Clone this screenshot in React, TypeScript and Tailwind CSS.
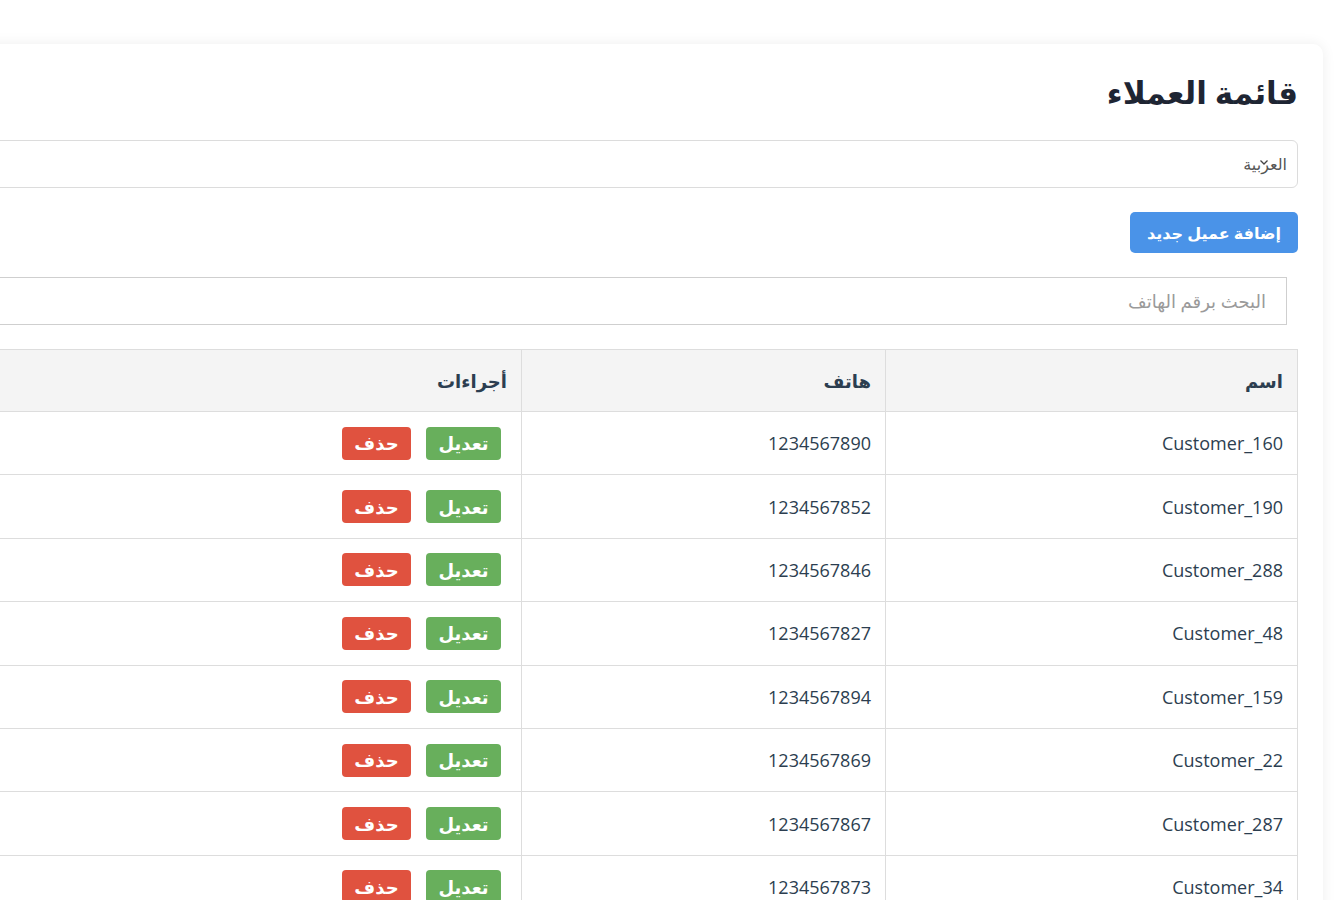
import React from "react";

type Customer = { name: string; phone: string };

const customers: Customer[] = [
  { name: "Customer_160", phone: "1234567890" },
  { name: "Customer_190", phone: "1234567852" },
  { name: "Customer_288", phone: "1234567846" },
  { name: "Customer_48", phone: "1234567827" },
  { name: "Customer_159", phone: "1234567894" },
  { name: "Customer_22", phone: "1234567869" },
  { name: "Customer_287", phone: "1234567867" },
  { name: "Customer_34", phone: "1234567873" },
  { name: "Customer_12", phone: "1234567801" },
];

const font = { fontFamily: '"Open Sans", "Noto Sans", "DejaVu Sans", sans-serif' };

export default function App() {
  return (
    <div
      dir="rtl"
      style={font}
      className="min-h-screen overflow-hidden bg-white pr-[17px] pt-[44px] text-[#2c3e50]"
    >
      <div className="w-[1420px] rounded-[10px] bg-white px-[25px] pb-10 pt-6 shadow-[0_0_14px_rgba(0,0,0,0.07)]">
        <h1 className="text-[31px] font-bold leading-[48px] text-[#1e2533]">
          قائمة العملاء
        </h1>

        <div className="relative mt-6">
          <select className="h-12 w-full appearance-none rounded-md border border-[#dcdcdc] bg-white px-[10px] text-base text-[#555] outline-none">
            <option>العربية</option>
            <option>English</option>
          </select>
          <svg
            className="pointer-events-none absolute right-[29px] top-[17px] h-[10px] w-[10px] text-[#444]"
            viewBox="0 0 10 10"
            fill="none"
            stroke="currentColor"
            strokeWidth="1.3"
          >
            <path d="M1.5 3.5 5 7l3.5-3.5" />
          </svg>
        </div>

        <button className="mt-6 h-[41px] rounded-[5px] bg-[#4a93e8] px-[17px] text-base font-bold text-white">
          إضافة عميل جديد
        </button>

        <input
          type="text"
          placeholder="البحث برقم الهاتف"
          className="mr-[11px] mt-6 block h-12 w-[calc(100%-11px)] border border-[#cfcfcf] px-5 text-lg text-[#333] outline-none placeholder:text-[#9a9a9a]"
        />

        <table className="mt-6 w-full table-fixed border-collapse text-right text-lg">
          <colgroup>
            <col className="w-[412px]" />
            <col className="w-[364px]" />
            <col />
          </colgroup>
          <thead>
            <tr className="h-[62px] bg-[#f4f4f4]">
              <th className="border border-[#dddddd] px-[14px] font-bold">اسم</th>
              <th className="border border-[#dddddd] px-[14px] font-bold">هاتف</th>
              <th className="border border-[#dddddd] px-[14px] font-bold">أجراءات</th>
            </tr>
          </thead>
          <tbody>
            {customers.map((c) => (
              <tr key={c.name} className="h-[63.4px]">
                <td className="border border-[#dddddd] px-[14px]">{c.name}</td>
                <td className="border border-[#dddddd] px-[14px]">{c.phone}</td>
                <td className="border border-[#dddddd] px-5">
                  <div className="flex gap-[15px]">
                    <button className="h-[33px] w-[75px] rounded-[4px] bg-[#68af5c] text-lg font-bold text-white">
                      تعديل
                    </button>
                    <button className="h-[33px] w-[69px] rounded-[4px] bg-[#e0523f] text-lg font-bold text-white">
                      حذف
                    </button>
                  </div>
                </td>
              </tr>
            ))}
          </tbody>
        </table>
      </div>
    </div>
  );
}
